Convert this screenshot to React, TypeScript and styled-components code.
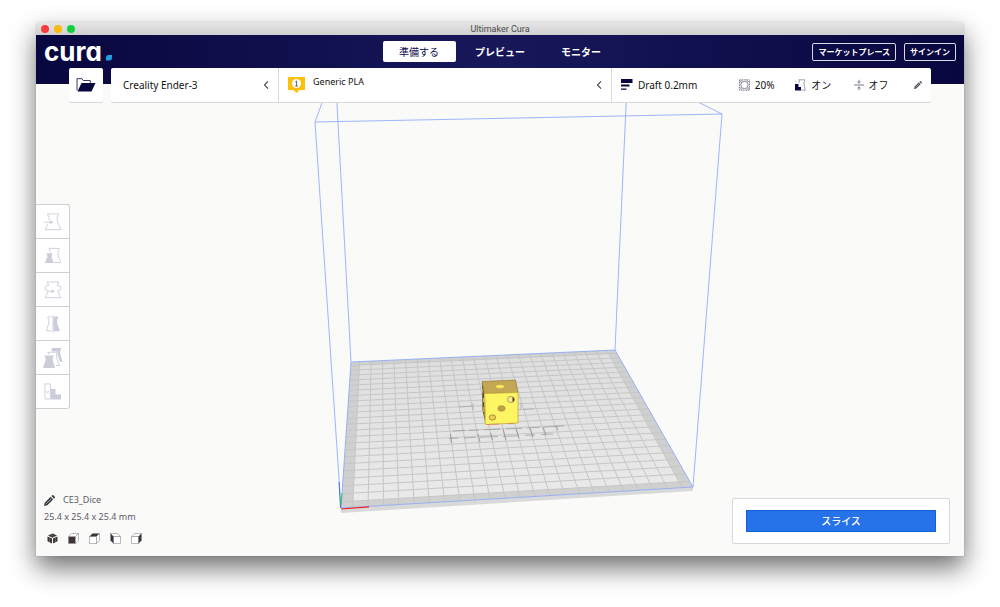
import React from "react";
import styled, { createGlobalStyle } from "styled-components";

const UI_FONT = `"Noto Sans", "Noto Sans CJK JP", sans-serif`;
const JP_FONT = `"Noto Sans CJK JP", "Noto Sans", sans-serif`;

const Global = createGlobalStyle`
  *, *::before, *::after { box-sizing: border-box; }
  body { margin: 0; background: #fff; font-family: ${UI_FONT}; font-size: 10px; line-height: 14px; color: #0a0850; }
  button { margin: 0; padding: 0; border: 0; background: none; font: inherit; color: inherit; cursor: pointer; }
  svg { display: block; flex: none; }
`;

/* ---------- window frame ---------- */

const Desktop = styled.div`
  display: flex;
  min-height: 100vh;
  padding: 22px 36px 51px;
`;

const Window = styled.div`
  flex: 1;
  min-width: 0;
  display: flex;
  flex-direction: column;
  border-radius: 3px 3px 1px 1px;
  background: #fafaf9;
  box-shadow: 0 0 1px rgba(0, 0, 0, 0.4), 0 12px 26px rgba(0, 0, 0, 0.56);
`;

const TitleBar = styled.div`
  display: grid;
  grid-template-columns: 1fr auto 1fr;
  align-items: center;
  height: 13px;
  padding: 0 5px;
  border-radius: 3px 3px 0 0;
  background: linear-gradient(#e6e6e6, #d0d0d0);
`;

const Lights = styled.div`
  display: flex;
  gap: 5px;
`;

const Light = styled.span<{ $color: string }>`
  width: 8px;
  height: 8px;
  border-radius: 50%;
  background: ${(p) => p.$color};
`;

const WindowTitle = styled.span`
  font-family: Roboto, sans-serif;
  font-size: 9px;
  line-height: 12px;
  color: #4a4a4a;
`;

/* ---------- header ---------- */

const Header = styled.header`
  display: grid;
  grid-template-columns: 1fr auto 1fr;
  align-items: center;
  height: 49px;
  padding: 0 8px 16px;
  background: linear-gradient(90deg, #08073f 0%, #18175a 50%, #08073f 100%);
`;

const Logo = styled.div`
  display: flex;
  align-items: flex-end;
  gap: 4px;
  font-family: Inter, sans-serif;
  font-size: 26px;
  font-weight: 700;
  line-height: 24px;
  font-feature-settings: "cv11";
  color: #fff;
`;

const Tabs = styled.nav`
  display: flex;
  gap: 8px;
`;

const Tab = styled.button<{ $active?: boolean }>`
  width: 73px;
  height: 21px;
  border-radius: 2px;
  font-family: ${JP_FONT};
  font-size: 10px;
  font-weight: ${(p) => (p.$active ? 400 : 700)};
  color: ${(p) => (p.$active ? "#0a0850" : "#fff")};
  background: ${(p) => (p.$active ? "#fff" : "transparent")};
`;

const HeaderActions = styled.div`
  display: flex;
  justify-content: flex-end;
  gap: 8px;
`;

const OutlineButton = styled.button`
  height: 18px;
  padding: 0 5px;
  border: 1px solid #d9d9e6;
  border-radius: 2px;
  font-family: ${JP_FONT};
  font-size: 8px;
  line-height: 14px;
  font-weight: 700;
  color: #fff;
`;

/* ---------- stage bar ---------- */

const Workspace = styled.main`
  position: relative;
  flex: 1;
  display: flex;
  flex-direction: column;
`;

const StageBar = styled.div`
  position: relative;
  display: flex;
  gap: 8px;
  margin: -16px 33px 0;
`;

const OpenButton = styled.button`
  display: grid;
  place-items: center;
  width: 34px;
  height: 34px;
  border-radius: 2px;
  background: #fff;
  box-shadow: 0 1px 0 #d8d8d8;
`;

const StagePanel = styled.div`
  flex: 1;
  display: grid;
  grid-template-columns: 168fr 333fr 319fr;
  height: 34px;
  border-radius: 2px;
  background: #fff;
  box-shadow: 0 1px 0 #d8d8d8;
`;

const Selector = styled.button`
  display: flex;
  align-items: center;
  gap: 8px;
  padding: 0 9px;
  border-right: 1px solid #d8d8d8;
  text-align: left;
  color: #111;
`;

const SelectorLabel = styled.span<{ $small?: boolean }>`
  flex: 1;
  font-size: ${(p) => (p.$small ? "9px" : "10px")};
  padding-left: ${(p) => (p.$small ? "0" : "3px")};
  padding-bottom: ${(p) => (p.$small ? "6px" : "0")};
`;

const PrintSetup = styled.button`
  display: grid;
  grid-template-columns: 117fr 56fr 58fr 60fr auto;
  align-items: center;
  padding: 0 9px;
  text-align: left;
  color: #111;
`;

const Summary = styled.span`
  display: flex;
  align-items: center;
  gap: 5px;
`;

/* ---------- tools ---------- */

const Tools = styled.div`
  position: relative;
  align-self: flex-start;
  margin-top: 102px;
  width: 34px;
  border-top: 1px solid #cfcfcf;
  border-right: 1px solid #cfcfcf;
  border-radius: 0 3px 3px 0;
  background: #fff;
`;

const Tool = styled.button`
  display: grid;
  place-items: center;
  width: 100%;
  height: 34px;
  border-bottom: 1px solid #cfcfcf;
  color: #cccddb;
  &:last-child { border-radius: 0 0 3px 0; }
`;

/* ---------- footer ---------- */

const Footer = styled.footer`
  position: relative;
  display: flex;
  justify-content: space-between;
  align-items: flex-end;
  margin-top: auto;
  padding: 0 14px 12px 8px;
`;

const ModelInfo = styled.div`
  display: flex;
  flex-direction: column;
  gap: 3px;
  font-size: 9px;
  color: #5a5a66;
`;

const ModelName = styled.div`
  display: flex;
  align-items: center;
  gap: 8px;
`;

const Views = styled.div`
  display: flex;
  gap: 10px;
  padding: 6px 0 0 3px;
`;

const SlicePanel = styled.div`
  width: 218px;
  padding: 11px 13px;
  border: 1px solid #d6d8dc;
  border-radius: 2px;
  background: #fff;
`;

const SliceButton = styled.button`
  display: block;
  width: 100%;
  height: 22px;
  border: 1px solid #1260dc;
  background: #2672e8;
  font-family: ${JP_FONT};
  font-size: 10px;
  font-weight: 500;
  color: #fff;
`;

const SceneSvg = styled.svg`
  position: absolute;
  inset: 0;
  width: 100%;
  height: 100%;
`;

/* ---------- build plate scene ---------- */

type Pt = [number, number];

const BACK_L: Pt = [351, 362];
const BACK_R: Pt = [615, 350];
const FRONT_R: Pt = [693, 487];
const FRONT_L: Pt = [341, 508];
const BED = 235;

// Perspective map from bed millimetres (x to the right, y to the front) to the view.
function project(xmm: number, ymm: number): Pt {
  const [x0, y0] = BACK_L;
  const [x1, y1] = BACK_R;
  const [x2, y2] = FRONT_R;
  const [x3, y3] = FRONT_L;
  const dx1 = x1 - x2, dx2 = x3 - x2, dx3 = x0 - x1 + x2 - x3;
  const dy1 = y1 - y2, dy2 = y3 - y2, dy3 = y0 - y1 + y2 - y3;
  const det = dx1 * dy2 - dx2 * dy1;
  const g = (dx3 * dy2 - dx2 * dy3) / det;
  const h = (dx1 * dy3 - dx3 * dy1) / det;
  const u = xmm / BED;
  const v = ymm / BED;
  const w = g * u + h * v + 1;
  return [
    ((x1 - x0 + g * x1) * u + (x3 - x0 + h * x3) * v + x0) / w,
    ((y1 - y0 + g * y1) * u + (y3 - y0 + h * y3) * v + y0) / w,
  ];
}

const poly = (pts: Pt[]) => pts.map((p) => p.map((n) => n.toFixed(2)).join(",")).join(" ");
const lines = Array.from({ length: 23 }, (_, i) => 7.5 + i * 10);
const path = (a: Pt, b: Pt) => `M${a[0].toFixed(2)} ${a[1].toFixed(2)}L${b[0].toFixed(2)} ${b[1].toFixed(2)}`;
const grid = lines
  .map((m) => path(project(m, 0), project(m, BED)) + path(project(0, m), project(BED, m)))
  .join("");
const EDGE = 7.5;
const inner: Pt[] = [
  project(EDGE, EDGE),
  project(BED - EDGE, EDGE),
  project(BED - EDGE, BED - EDGE),
  project(EDGE, BED - EDGE),
];

const Scene = () => (
  <SceneSvg viewBox="36 84 928 472" preserveAspectRatio="xMidYMid slice" aria-hidden="true">
    <defs>
      <linearGradient id="plate" x1="0" y1="0" x2="0" y2="1">
        <stop offset="0" stopColor="#dedede" />
        <stop offset="1" stopColor="#eaeaea" />
      </linearGradient>
    </defs>
    <polygon points={poly([FRONT_L, FRONT_R, [693, 491], [341, 513]])} fill="#d9d9d9" />
    <polygon points={poly([BACK_L, BACK_R, FRONT_R, FRONT_L])} fill="#d0d0d0" />
    <polygon points={poly(inner)} fill="url(#plate)" />
    <path d={grid} stroke="#c6c6c6" strokeWidth="1" fill="none" />
    <g stroke="#858585" strokeWidth="0.7" fill="none">
      <path d="M459 407l14-1M523 409.500l11-.8M521 403v7M473 403v7" opacity=".6" />
      <path d="M453 431l12-.6m4 0l10-.4m5-.2l16-.6m6-.2l16-.8m5-.2l13-.7m4-.2l20-1.200" opacity=".8" />
      <path d="M449 438.500l9-.4m6-.2l12-.5m4-.2l18-.7m5-.1l16-.7m6-.4l10-.4m6-.4l12-.6" opacity=".8" />
      <path d="M450.500 434l1 9M478 434l2 8M490.500 433l2 7M503 429l3 11M516 429l3 9M530 428l3 9M543 427l3 8M556 426l2 4" />
    </g>
    <g stroke="#86a4fa" strokeWidth="0.8" fill="none">
      <polygon points={poly([BACK_L, BACK_R, FRONT_R, FRONT_L])} />
      <path d="M341 508L315 122L722 114L693 487M351 362L335.900 84M615 350L627 84M315 122L329 84M722 114L662 84" />
    </g>
    <path d="M341 509l28-2.200" stroke="#f02020" strokeWidth="1.200" />
    <path d="M340.500 508L339 482" stroke="#2060d8" strokeWidth=".8" />
    <path d="M341 505L342 493" stroke="#30d040" strokeWidth="1" />
    {/* die */}
    <polygon points="482,381.500 484.500,393.500 485.500,424 482.500,410" fill="#5c4a22" />
    <polygon points="482,381.500 515.500,380 518,392.500 484.500,393.500" fill="#c4a753" stroke="#8b722f" strokeWidth=".6" />
    <polygon points="484.500,393.500 518,392.500 518,423 485.500,424.500" fill="#fdf562" stroke="#c9a83c" strokeWidth=".8" />
    <path d="M484.500 393.500l1 30" stroke="#e0be4a" strokeWidth="1.200" />
    <ellipse cx="500" cy="386.500" rx="4" ry="1.800" fill="#f7e85c" />
    <ellipse cx="501.500" cy="408.500" rx="3.600" ry="2.800" fill="#c2a145" stroke="#9d7f32" strokeWidth=".6" />
    <ellipse cx="492.500" cy="417.500" rx="3.200" ry="2.600" fill="#e9d255" stroke="#a98835" strokeWidth="1" />
    <ellipse cx="511" cy="399.500" rx="3.600" ry="3" fill="#f4ec9a" stroke="#a98835" strokeWidth=".8" />
    <path d="M512.500 396.900a2.800 2.800 0 0 1 0 5.200z" fill="#4d3f1e" />
    <path d="M482.800 389v4M483.500 398v4M483.700 407v5" stroke="#d9bb4c" strokeWidth="1" />
    <path d="M487 424.500l12-.4M508 423.800l6-.2" stroke="#e8663a" strokeWidth=".6" />
  </SceneSvg>
);

/* ---------- icons ---------- */

const Chevron = () => (
  <svg width="6" height="10" viewBox="0 0 6 10" fill="none" stroke="#444" strokeWidth="1.100">
    <path d="M5 1.300L1.500 5L5 8.700" />
  </svg>
);

const FolderIcon = () => (
  <svg width="20" height="14" viewBox="0 0 20 14">
    <path d="M1 12.500V.7h5l1.300 1.800h7V5" fill="none" stroke="#3a3968" strokeWidth="1" />
    <path d="M5.500 5H19.500L15.500 13.500H1.500Z" fill="#08073f" />
  </svg>
);

const ExtruderIcon = () => (
  <svg width="17" height="18" viewBox="0 0 17 18">
    <path d="M0 1h17v13h-5.500L8.500 17l-3-3H0z" fill="#fec10b" />
    <circle cx="8.500" cy="7.500" r="4.500" fill="#fff" />
    <path d="M7.300 5.900l1.300-.9v5M7.200 10h2.700" fill="none" stroke="#555" strokeWidth=".9" />
  </svg>
);

const LayersIcon = () => (
  <svg width="12" height="12" viewBox="0 0 12 12" fill="#08073f">
    <path d="M0 0h11.500v4H0zM0 5.500h8.500v2H0zM0 9.500h5.500v1.200H0z" />
  </svg>
);

const InfillIcon = () => (
  <svg width="11" height="12" viewBox="0 0 11 12" fill="none" stroke="#66667f" strokeWidth=".8">
    <path d="M.5 .8h10v10.400H.5z" strokeDasharray="1.500 .8" />
    <path d="M.5 3.800L3.500 .8M7.500 .8l3 3M.5 8.200l3 3M7.500 11.200l3-3" />
    <circle cx="5.500" cy="6" r="3.700" />
  </svg>
);

const SupportIcon = () => (
  <svg width="11" height="12" viewBox="0 0 11 12">
    <path d="M3.800 .8h6L8.800 4.500l1.500 6.700H6.300M3.800 .8L4.300 4" fill="#fff" stroke="#8a8aa3" strokeWidth=".8" />
    <path d="M0 5h3.500V8H6V11.500H0z" fill="#08073f" />
    <path d="M.8 1v3.500" fill="none" stroke="#c4c4d2" strokeWidth=".7" />
  </svg>
);

const AdhesionIcon = () => (
  <svg width="10" height="12" viewBox="0 0 10 12" fill="none" stroke="#66667f" strokeWidth=".9">
    <path d="M0 6h10M5 .8v3M5 11.200v-3M3.500 2.800L5 4.200l1.500-1.400M3.500 9.200L5 7.800l1.500 1.400" />
  </svg>
);

const PencilIcon = ({ size, color }: { size: number; color: string }) => (
  <svg width={size} height={size} viewBox="0 0 10 10" fill={color}>
    <path d="M0 10l.7-3L6 1.700l2.300 2.300L3 9.300zM6.700 1l.8-.8q.5-.4 1 0l1.300 1.300q.4.500 0 1L9 3.300z" />
    <path d="M2 8L6.500 3.500" stroke="#fafaf9" strokeWidth=".5" />
  </svg>
);

const ToolSvg = ({ children }: { children: React.ReactNode }) => (
  <svg width="20" height="20" viewBox="0 0 20 20" fill="none" stroke="currentColor" strokeWidth=".9">
    {children}
  </svg>
);

const tools: { label: string; icon: React.ReactNode }[] = [
  {
    label: "移動",
    icon: (
      <>
        <path d="M5.800 8.500L6.300 6.500L4.500 1.900H15.700L13.800 6.500L14.500 9.500L18 17.600H2.200L5 12" />
        <path d="M1.500 10.300h6" />
        <path d="M7 8.300L10.500 10.300L7 12.300z" fill="currentColor" stroke="none" />
      </>
    ),
  },
  {
    label: "拡大縮小",
    icon: (
      <>
        <path d="M7.700 6.500L6 2.400H16.300L14.800 6.500L15.300 9.500L17.700 16.500H11" />
        <path d="M3.500 7.300H9.300L8.500 10.500L10.700 17H1.900L4.500 10.500z" fill="currentColor" stroke="none" />
      </>
    ),
  },
  {
    label: "回転",
    icon: (
      <>
        <path d="M5.700 5.500L4.300 1.900H15.700L14.300 5.500M5.200 11L2.200 17.600H17.800L14.800 11" />
        <path d="M5.700 5.700Q1.800 5.300 1.800 7.800T5.200 10.600M14.300 5.700Q18.200 5.300 18.200 7.800T14.800 10.600" />
        <path d="M5 11.300h4" />
        <path d="M8.500 9.300L12 11.300L8.500 13.300z" fill="currentColor" stroke="none" />
      </>
    ),
  },
  {
    label: "ミラー",
    icon: (
      <>
        <path d="M8.500 2.900H4.700L6 7L5.500 10L3.500 16.800H8.500M10 1v18" />
        <path d="M10.500 2.500H15.200L14 7L14.500 10L16.900 17.200H10.500z" fill="currentColor" stroke="none" />
      </>
    ),
  },
  {
    label: "モデル別設定",
    icon: (
      <>
        <path d="M8.700 0H18.300L17 4L17.500 7L19.700 13.700H17L14.500 7V3.500H8.700z" fill="currentColor" stroke="none" />
        <path d="M6 6.500L4.800 4.300H14.300L13.500 8L14 11L16.500 17.500H12.800" />
        <path d="M1.500 7.500H10.800L9.500 11.500L12 20H0L2.800 11.500z" fill="currentColor" stroke="none" />
      </>
    ),
  },
  {
    label: "サポートブロッカー",
    icon: (
      <>
        <path d="M1.900 1.900H7.400V17H1.900zM3.300 8.800l2.700 2.700M6 8.800l-2.700 2.700" />
        <path d="M7.800 7H12.500V12.500H18V17.400H7.800z" fill="currentColor" stroke="none" />
      </>
    ),
  },
];

const TOP = "M.5 3.500L3.500 .5H10.500L7.500 3.500z";
const FRONT = "M.5 3.500H7.500V10.500H.5z";
const SIDE = "M7.500 3.500L10.500 .5V7.500L7.500 10.500z";

const CubeIcon = ({ face }: { face?: "front" | "top" | "left" | "right" }) =>
  face ? (
    <svg width="11" height="11" viewBox="0 0 11 11" fill="#fff" stroke="#8c8c94" strokeWidth=".6">
      {face === "left" ? (
        <>
          <path d="M.5 .5H7.500L10.500 3.500H3.500z" />
          <path d="M3.500 3.500H10.500V10.500H3.500z" />
          <path d="M.5 .5L3.500 3.500V10.500L.5 7.500z" fill="#3d3436" />
        </>
      ) : (
        <>
          <path d={FRONT} fill={face === "front" ? "#3d3436" : "#fff"} />
          <path d={TOP} fill={face === "top" ? "#3d3436" : "#fff"} />
          <path d={SIDE} fill={face === "right" ? "#3d3436" : "#fff"} />
        </>
      )}
    </svg>
  ) : (
    <svg width="11" height="11" viewBox="0 0 11 11" fill="#3d3436">
      <path d="M5.500 .5L10 2.500L5.500 4.700L1 2.500zM.5 3.500L5 5.600V10.500L.5 8.200zM10.500 3.500L6 5.600V10.500L10.500 8.200z" />
      <path d="M2.500 5v4M8.500 5v4M3.500 1.800l4 2" stroke="#8c8688" strokeWidth=".5" />
    </svg>
  );

const views: { label: string; face?: "front" | "top" | "left" | "right" }[] = [
  { label: "3Dビュー" },
  { label: "フロントビュー", face: "front" },
  { label: "トップビュー", face: "top" },
  { label: "左ビュー", face: "left" },
  { label: "右ビュー", face: "right" },
];

export default function App() {
  return (
    <>
      <Global />
      <Desktop>
        <Window>
          <TitleBar>
            <Lights>
              <Light $color="#fb3b3f" />
              <Light $color="#fdb90f" />
              <Light $color="#12cf3f" />
            </Lights>
            <WindowTitle>Ultimaker Cura</WindowTitle>
          </TitleBar>

          <Header>
            <Logo>
              cura
              <svg width="6" height="9" viewBox="0 0 6 9">
                <path d="M2.500 0H6V2.500Q6 5.500 3.500 5.500H0V3Q0 0 2.500 0z" fill="#1f9fdc" />
              </svg>
            </Logo>
            <Tabs>
              <Tab $active>準備する</Tab>
              <Tab>プレビュー</Tab>
              <Tab>モニター</Tab>
            </Tabs>
            <HeaderActions>
              <OutlineButton>マーケットプレース</OutlineButton>
              <OutlineButton>サインイン</OutlineButton>
            </HeaderActions>
          </Header>

          <Workspace>
            <Scene />
            <StageBar>
              <OpenButton aria-label="ファイルを開く">
                <FolderIcon />
              </OpenButton>
              <StagePanel>
                <Selector>
                  <SelectorLabel>Creality Ender-3</SelectorLabel>
                  <Chevron />
                </Selector>
                <Selector>
                  <ExtruderIcon />
                  <SelectorLabel $small>Generic PLA</SelectorLabel>
                  <Chevron />
                </Selector>
                <PrintSetup>
                  <Summary>
                    <LayersIcon />
                    Draft 0.2mm
                  </Summary>
                  <Summary>
                    <InfillIcon />
                    20%
                  </Summary>
                  <Summary>
                    <SupportIcon />
                    オン
                  </Summary>
                  <Summary>
                    <AdhesionIcon />
                    オフ
                  </Summary>
                  <PencilIcon size={8} color="#55555f" />
                </PrintSetup>
              </StagePanel>
            </StageBar>

            <Tools>
              {tools.map((t) => (
                <Tool key={t.label} aria-label={t.label}>
                  <ToolSvg>{t.icon}</ToolSvg>
                </Tool>
              ))}
            </Tools>

            <Footer>
              <ModelInfo>
                <ModelName>
                  <button aria-label="名前を編集">
                    <PencilIcon size={11} color="#3d3d44" />
                  </button>
                  CE3_Dice
                </ModelName>
                <span>25.4 x 25.4 x 25.4 mm</span>
                <Views>
                  {views.map((v) => (
                    <button key={v.label} aria-label={v.label}>
                      <CubeIcon face={v.face} />
                    </button>
                  ))}
                </Views>
              </ModelInfo>
              <SlicePanel>
                <SliceButton>スライス</SliceButton>
              </SlicePanel>
            </Footer>
          </Workspace>
        </Window>
      </Desktop>
    </>
  );
}
